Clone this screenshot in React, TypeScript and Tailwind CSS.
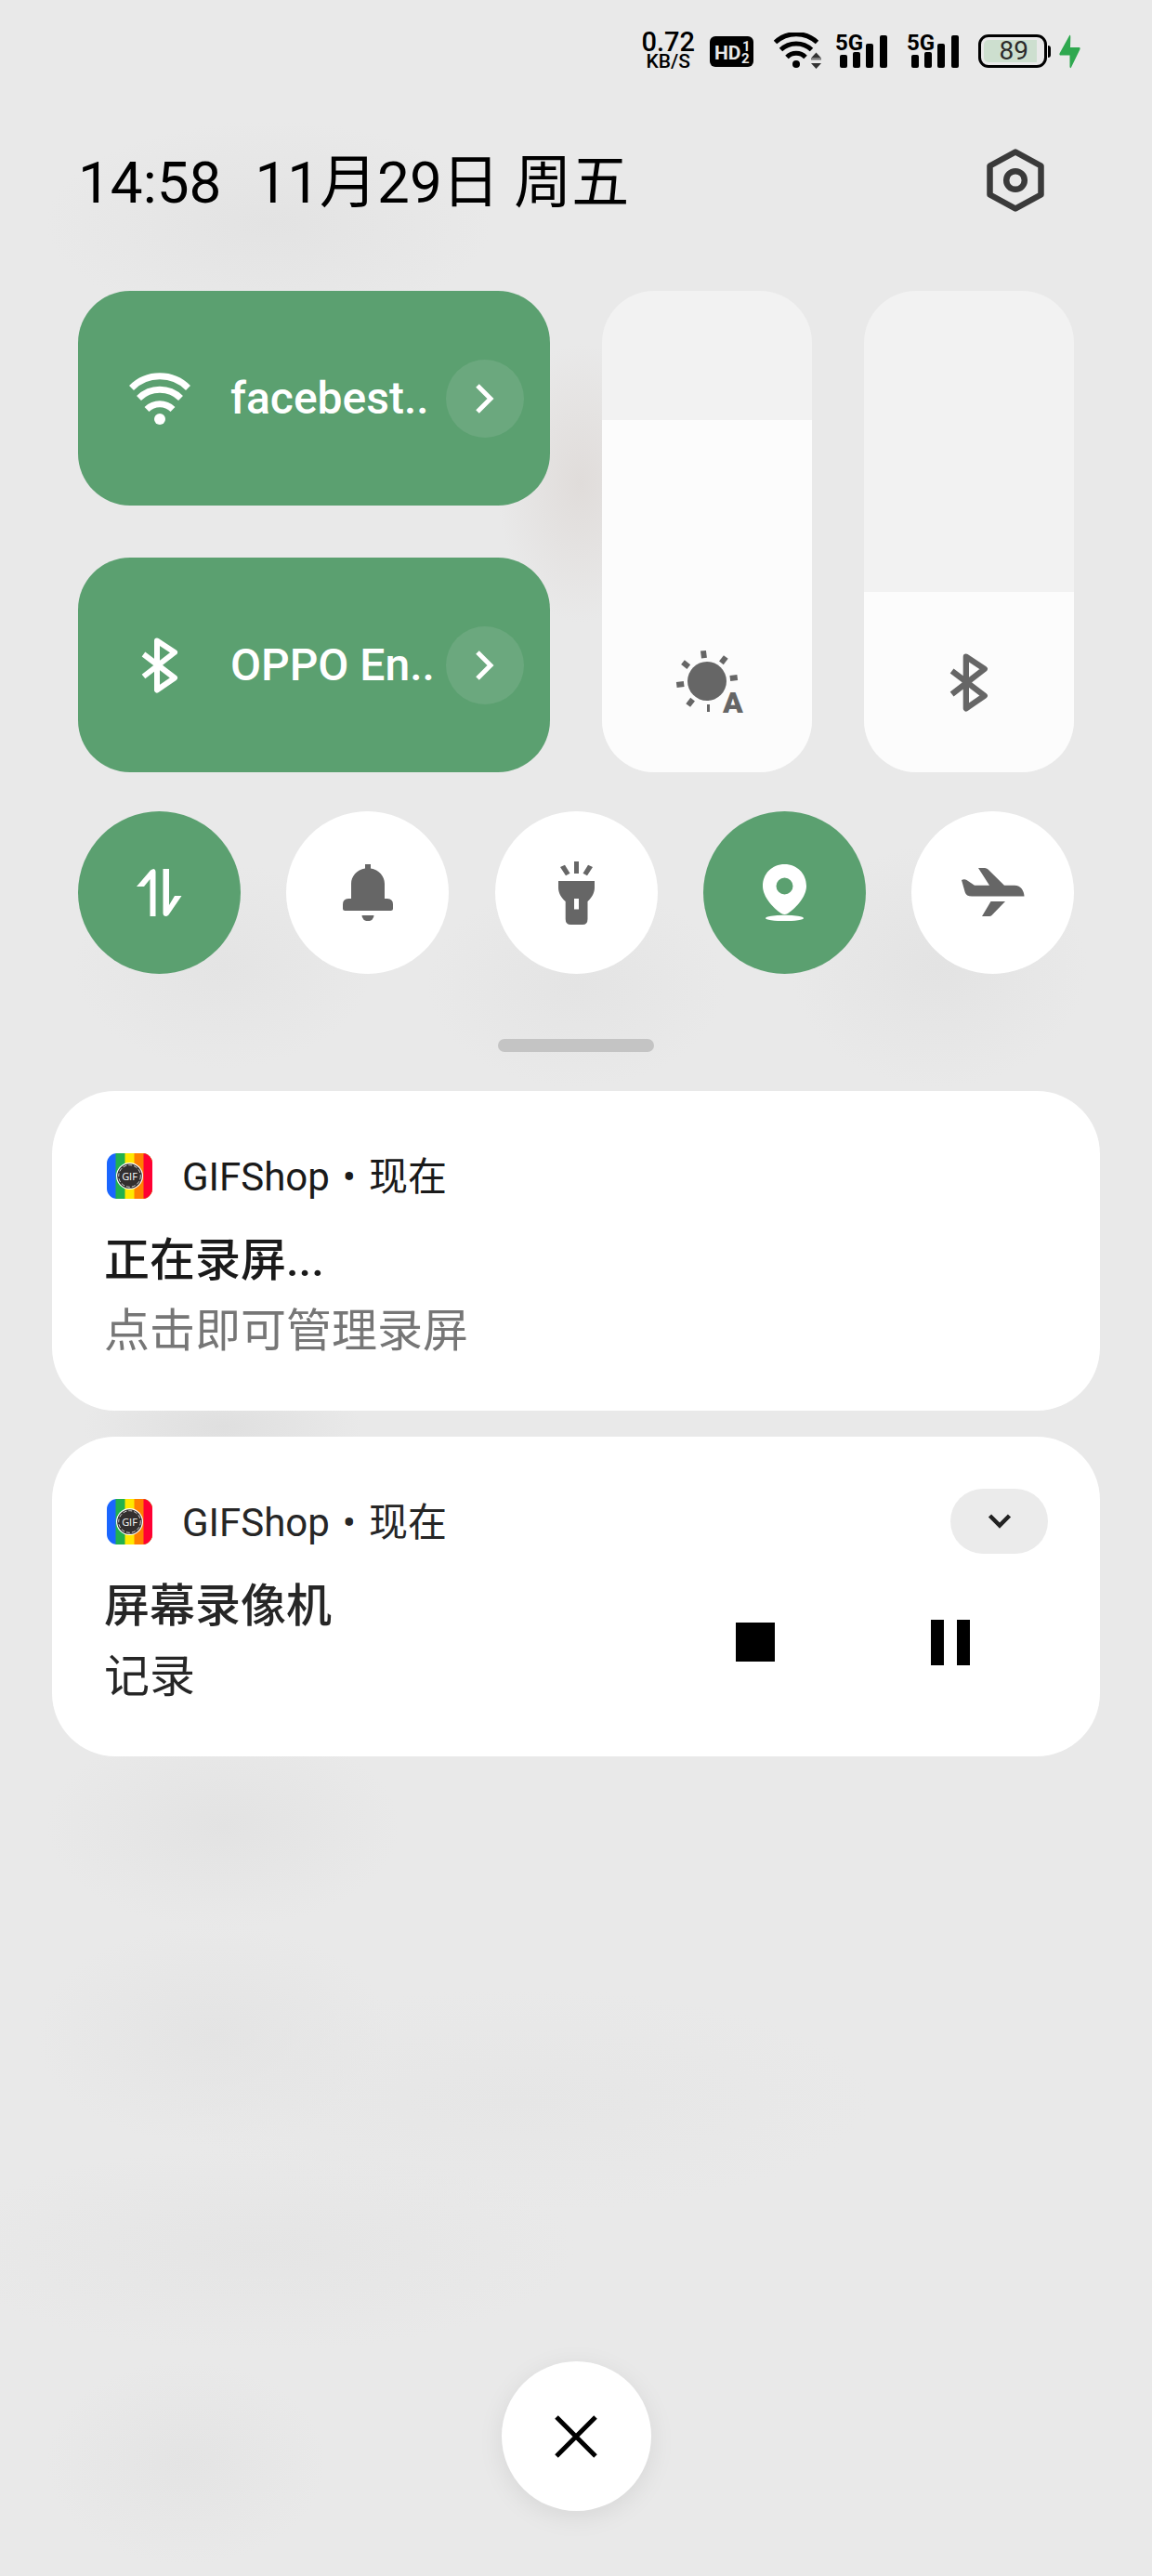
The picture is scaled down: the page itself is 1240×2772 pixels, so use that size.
import React, { useState } from "react";

const FONT = "font-['Roboto','Noto_Sans_CJK_SC',sans-serif]";

function BluetoothIcon({ className }: { className: string }) {
  return (
    <svg viewBox="0 0 40 60" className={className} fill="none" stroke="currentColor" strokeWidth="6" strokeLinejoin="round" aria-hidden="true">
      <path d="M2.5 18 L36 43.5 L17 56.5 V3.5 L36 16 L2.5 42" />
    </svg>
  );
}

function WifiIcon() {
  return (
    <svg viewBox="0 0 66 56" className="w-[66px] h-[56px]" fill="none" stroke="currentColor" strokeWidth="7" aria-hidden="true">
      <path d="M2.5 16.5 A43 43 0 0 1 63.5 16.5" />
      <path d="M10.5 27.6 A32 32 0 0 1 55.5 27.6" />
      <path d="M19 39.5 A20 20 0 0 1 47 39.5" />
      <circle cx="33" cy="50" r="6" fill="currentColor" stroke="none" />
    </svg>
  );
}

const SUN_RAYS = [-7, -52, -97, -142, 173, 128];

function SunAutoIcon() {
  return (
    <svg viewBox="-40 -34 80 70" className="w-[80px] h-[70px] overflow-visible" fill="currentColor" aria-hidden="true">
      <circle r="21" />
      {SUN_RAYS.map((angle) => (
        <rect key={angle} x="25" y="-3" width="8" height="6" transform={`rotate(${angle})`} />
      ))}
      <rect x="0" y="25" width="3" height="8" />
      <text x="28" y="34" textAnchor="middle" className="font-['Roboto',sans-serif] font-black text-[32px]">A</text>
    </svg>
  );
}

function DataIcon() {
  return (
    <svg viewBox="0 0 49 51" className="w-[49px] h-[51px]" fill="currentColor" aria-hidden="true">
      <path d="M0 19 L15 1.5 Q17 0 18.5 0 Q20.5 0.3 20.5 3 V51 H14.5 V11 L8 19Z" />
      <path d="M28.5 0 H35 V39 L41 29 H48.5 L34.5 49.5 Q33 51 31 51 Q28.5 50.7 28.5 48Z" />
    </svg>
  );
}

function BellIcon() {
  return (
    <svg viewBox="0 0 54 61" className="w-[54px] h-[61px]" fill="currentColor" aria-hidden="true">
      <path d="M24 0 H30 V4.5 C39 6 45 13 45 21 V37 H48 Q54 37.5 54 43 V47.5 Q54 50 51.5 50 H2.5 Q0 50 0 47.5 V43 Q0 37.5 6 37 H9 V21 C9 13 15 6 24 4.5Z" />
      <path d="M20.5 55 H33.5 A6.5 6.2 0 0 1 20.5 55Z" />
    </svg>
  );
}

function TorchIcon() {
  return (
    <svg viewBox="0 0 39 68" className="w-[39px] h-[68px]" fill="currentColor" aria-hidden="true">
      <path d="M17 0 H22 V13 H17Z M2 6 L7 3.7 L12.5 12.7 L8 15.3Z M37 6 L32 3.7 L26.5 12.7 L31 15.3Z" />
      <path fillRule="evenodd" d="M0 21 H39 V28 C39 34 36 39 31.5 43 V62 Q31.5 68 26 68 H13.5 Q7.7 68 7.7 62 V43 C3 39 0 34 0 28Z M17 40 V51.5 H22 V40Z" />
    </svg>
  );
}

function PinIcon() {
  return (
    <svg viewBox="0 0 47 61" className="w-[47px] h-[61px]" fill="currentColor" aria-hidden="true">
      <path fillRule="evenodd" d="M23.5 0 C10 0 0 10 0 23.5 C0 35 11 47 20 53 Q23.5 55 27 53 C36 47 47 35 47 23.5 C47 10 37 0 23.5 0Z M23.5 14.5 A9 9 0 1 1 23.5 32.5 A9 9 0 1 1 23.5 14.5Z" />
      <ellipse cx="23.5" cy="58" rx="20.5" ry="3.2" />
    </svg>
  );
}

function PlaneIcon() {
  return (
    <svg viewBox="0 0 68 53" className="w-[68px] h-[53px]" fill="currentColor" aria-hidden="true">
      <path d="M0 13 Q3 11.5 5.5 13 L14 18.7 H30 L18 0 H25 Q27 0 28.5 1.5 L46 18.7 H57 C64 18.7 67.5 25 67.5 30.5 H11 Q5 30.5 3.7 26Z" />
      <path d="M31.5 36 H47 L32.5 51 Q31.5 52 30 52 H22Z" />
    </svg>
  );
}

function Chevron() {
  return (
    <svg viewBox="0 0 22 34" className="w-[22px] h-[34px]" fill="none" stroke="currentColor" strokeWidth="5" aria-hidden="true">
      <path d="M3 3 L17 17 L3 31" />
    </svg>
  );
}

function Signal({ className }: { className: string }) {
  return (
    <svg viewBox="0 0 54 40" className={`w-[54px] h-[40px] overflow-visible ${className}`} role="img" aria-label="5G 信号">
      <text x="-2" y="19" className="font-['Roboto',sans-serif] font-bold text-[24px]">5G</text>
      <rect x="3" y="24" width="8" height="14" rx="2" />
      <rect x="17" y="21" width="8" height="17" rx="2" />
      <rect x="31" y="12" width="8" height="26" rx="2" />
      <rect x="46" y="3" width="8" height="35" rx="2" />
    </svg>
  );
}

function StatusBar() {
  return (
    <div className="flex h-[110px] items-center justify-end pr-[77px] text-black">
      <div className="flex flex-col items-center font-medium">
        <span className="text-[29px] leading-[22px]">0.72</span>
        <span className="text-[21px] leading-[20px]">KB/S</span>
      </div>
      <svg viewBox="0 0 47 33" className="ml-4 h-[33px] w-[47px]" role="img" aria-label="HD 1 2">
        <rect width="47" height="33" rx="6" />
        <g fill="#e8e8e8" className="font-['Roboto',sans-serif] font-bold">
          <text x="5" y="25" className="text-[21px]">HD</text>
          <text x="35" y="16" className="text-[15px]">1</text>
          <text x="34" y="29" className="text-[15px]">2</text>
        </g>
      </svg>
      <svg viewBox="0 0 52 40" className="ml-[22px] h-[40px] w-[52px]" fill="none" stroke="currentColor" strokeWidth="5" role="img" aria-label="WLAN">
        <path d="M1.500 10.5 A33 33 0 0 1 46.5 10.5" />
        <path d="M7.5 18.5 A24 24 0 0 1 40.5 18.5" />
        <path d="M14 26.5 A14 14 0 0 1 34 26.5" />
        <circle cx="24" cy="34" r="4" fill="currentColor" stroke="none" />
        <path d="M40 27.5 L45.5 21.5 L51 27.5Z M40 33 L45.5 39 L51 33Z" fill="#333" stroke="none" />
        <path d="M40 28.5 H51" stroke="#777" strokeWidth="2" />
      </svg>
      <Signal className="ml-4" />
      <Signal className="ml-[23px]" />
      <div className="ml-[21px] flex items-center" role="img" aria-label="电量 89%">
        <div className="flex h-[36px] w-[74px] items-center rounded-[11px] border-[3px] border-black p-[3px]">
          <div className="flex h-[24px] w-[57px] items-center justify-end rounded-l-[5px] bg-[#cddfcf] pr-[9px] text-[28px] leading-6 text-[#2b2b2b]">
            89
          </div>
        </div>
        <div className="ml-px h-[13px] w-[3px] rounded-r-sm bg-black" />
      </div>
      <svg viewBox="0 0 23 37" className="ml-[9px] h-[37px] w-[23px]" fill="#2fa84f" role="img" aria-label="充电中">
        <path d="M11.5 0.5 Q12.5 1 12.3 3 L12 14 H22 Q23 14.5 22.5 16 L13 35.5 Q12 37 11.5 35 V22.5 H1 Q0 22 0.5 20.5Z" />
      </svg>
    </div>
  );
}

function Tile({ icon, label }: { icon: React.ReactNode; label: string }) {
  return (
    <div className="flex h-[231px] items-center rounded-[56px] bg-[#5ba070] pr-7 text-white">
      <button type="button" className="flex h-full min-w-0 flex-1 items-center pl-11 text-left">
        <span className="flex w-[88px] shrink-0 justify-center">{icon}</span>
        <span className="ml-8 whitespace-nowrap text-[48px] font-medium leading-[60px]">{label}</span>
      </button>
      <button type="button" aria-label={`${label} 详情`} className="flex size-[84px] shrink-0 items-center justify-center rounded-full bg-[#6ba87e]">
        <Chevron />
      </button>
    </div>
  );
}

function VerticalSlider({ label, initial, children }: { label: string; initial: number; children: React.ReactNode }) {
  const [value, setValue] = useState(initial);
  return (
    <label className="relative flex flex-col justify-end overflow-hidden rounded-[56px] bg-[#f2f2f2] text-[#666]">
      <span className="block bg-[#fcfcfc]" style={{ height: `${value / 10}%` }} />
      <span className="absolute inset-x-0 bottom-[62px] flex h-[70px] items-center justify-center">{children}</span>
      <input
        type="range"
        min={0}
        max={1000}
        value={value}
        onChange={(e) => setValue(Number(e.target.value))}
        aria-label={label}
        className="absolute inset-0 h-full w-full opacity-0 [direction:rtl] [writing-mode:vertical-lr]"
      />
    </label>
  );
}

function RoundToggle({ label, on, children }: { label: string; on?: boolean; children: React.ReactNode }) {
  return (
    <button
      type="button"
      aria-label={label}
      aria-pressed={!!on}
      className={`flex size-[175px] items-center justify-center rounded-full ${on ? "bg-[#5ba070] text-white" : "bg-white text-[#666]"}`}
    >
      {children}
    </button>
  );
}

function AppIcon() {
  return (
    <svg viewBox="0 0 49 49" className="ml-[3px] size-[49px] overflow-hidden rounded-[11px]" role="img" aria-label="GIFShop">
      <rect width="49" height="49" fill="#1a66ff" />
      <rect x="9.5" width="40" height="49" fill="#22b14c" />
      <rect x="19.5" width="30" height="49" fill="#ffe800" />
      <rect x="29.5" width="20" height="49" fill="#ff8000" />
      <rect x="39.5" width="10" height="49" fill="#ff0033" />
      <circle cx="24.5" cy="24.5" r="14.5" fill="#fff" />
      <circle cx="24.5" cy="24.5" r="13.3" fill="#332f2f" />
      <circle cx="24.5" cy="24.5" r="11.8" fill="none" stroke="#fff" strokeWidth="0.8" strokeDasharray="4 2" />
      <text x="24.5" y="28.5" textAnchor="middle" fill="#fff" className="font-['Open_Sans',sans-serif] text-[11px]">GIF</text>
    </svg>
  );
}

interface CardProps {
  title: string;
  body: string;
  tone: string;
  bodyTone: string;
  expand?: React.ReactNode;
  actions?: React.ReactNode;
}

function NotificationCard({ title, body, tone, bodyTone, expand, actions }: CardProps) {
  return (
    <article className="rounded-[68px] bg-white px-14 pb-[47px] pt-14">
      <header className={`flex h-[70px] items-center ${tone}`}>
        <AppIcon />
        <p className="ml-8 flex-1 pt-1 text-[42px] leading-[56px]">
          GIFShop<span className="mx-3.5">•</span>现在
        </p>
        {expand}
      </header>
      <div className="mt-[19px] flex items-center justify-between">
        <div className="text-[49px] leading-[76px]">
          <h2 className={`font-medium ${tone}`}>{title}</h2>
          <p className={bodyTone}>{body}</p>
        </div>
        {actions}
      </div>
    </article>
  );
}

export default function App() {
  return (
    <main
      className={`flex min-h-screen flex-col bg-[#e9e9e9] bg-[radial-gradient(ellipse_240px_110px_at_290px_240px,#e3e3e3,transparent),radial-gradient(ellipse_90px_150px_at_625px_520px,#e0dcda,transparent),radial-gradient(ellipse_160px_110px_at_240px_1040px,#e4e4e4,transparent),radial-gradient(ellipse_160px_110px_at_620px_1060px,#e4e4e4,transparent),radial-gradient(ellipse_160px_130px_at_1010px_1040px,#e3e3e3,transparent),radial-gradient(ellipse_150px_60px_at_240px_1535px,#dfdfdf,transparent),radial-gradient(ellipse_190px_110px_at_240px_1965px,#e3e3e3,transparent),radial-gradient(ellipse_190px_120px_at_230px_2190px,#e4e4e4,transparent),radial-gradient(ellipse_380px_120px_at_560px_2260px,#e6e6e6,transparent),radial-gradient(ellipse_340px_110px_at_280px_2420px,#e5e5e5,transparent),radial-gradient(ellipse_150px_110px_at_200px_2650px,#e4e4e4,transparent)] ${FONT}`}
    >
      <StatusBar />

      <header className="flex h-[168px] items-center justify-between pl-[84px] pr-[116px]">
        <h1 className="flex gap-9 pt-1.5 text-[62px] leading-[80px] text-black">
          <time>14:58</time>
          <span>11月29日 周五</span>
        </h1>
        <button type="button" aria-label="设置">
          <svg viewBox="0 0 62 68" className="h-[68px] w-[62px]" fill="none" stroke="#3a3a3a" strokeWidth="6.5" strokeLinejoin="round" aria-hidden="true">
            <path d="M31 3.5 L58.5 18.5 V49.5 L31 64.5 L3.5 49.5 V18.5Z" />
            <circle cx="31" cy="34" r="9.8" />
          </svg>
        </button>
      </header>

      <section aria-label="快捷设置" className="mt-[35px] px-[84px]">
        <div className="grid grid-cols-[508fr_226fr_226fr] gap-14">
          <div className="flex flex-col gap-14">
            <Tile icon={<WifiIcon />} label="facebest.." />
            <Tile icon={<BluetoothIcon className="h-[60px] w-[40px]" />} label="OPPO En.." />
          </div>
          <VerticalSlider label="亮度" initial={732}>
            <SunAutoIcon />
          </VerticalSlider>
          <VerticalSlider label="蓝牙音量" initial={374}>
            <BluetoothIcon className="h-[63px] w-[42px]" />
          </VerticalSlider>
        </div>
        <div className="mt-[42px] flex justify-between">
          <RoundToggle label="移动数据" on><DataIcon /></RoundToggle>
          <RoundToggle label="响铃"><BellIcon /></RoundToggle>
          <RoundToggle label="手电筒"><TorchIcon /></RoundToggle>
          <RoundToggle label="位置信息" on><PinIcon /></RoundToggle>
          <RoundToggle label="飞行模式"><PlaneIcon /></RoundToggle>
        </div>
      </section>

      <div className="mt-[70px] h-[14px] w-[168px] self-center rounded-full bg-[#c4c4c4]" />

      <section aria-label="通知" className="mt-[42px] flex flex-col gap-7 px-14">
        <NotificationCard title="正在录屏..." body="点击即可管理录屏" tone="text-[#1a1a1a]" bodyTone="text-[#767676]" />
        <NotificationCard
          title="屏幕录像机"
          body="记录"
          tone="text-[#262626]"
          bodyTone="text-[#262626]"
          expand={
            <button type="button" aria-label="展开" className="flex h-[70px] w-[105px] items-center justify-center rounded-full bg-[#ebebeb]">
              <svg viewBox="0 0 26 16" className="h-[16px] w-[26px]" fill="none" stroke="#222" strokeWidth="4.5" aria-hidden="true">
                <path d="M2.5 2 L13 12.5 L23.5 2" />
              </svg>
            </button>
          }
          actions={
            <div className="flex">
              <button type="button" aria-label="停止" className="flex h-[105px] w-[210px] items-center justify-center">
                <span className="size-[42px] bg-black" />
              </button>
              <button type="button" aria-label="暂停" className="flex h-[105px] w-[210px] items-center justify-center gap-[14px]">
                <span className="h-[49px] w-[14px] bg-black" />
                <span className="h-[49px] w-[14px] bg-black" />
              </button>
            </div>
          }
        />
      </section>

      <div className="mt-auto flex justify-center pb-[70px] pt-14">
        <button type="button" aria-label="清除全部" className="flex size-[161px] items-center justify-center rounded-full bg-white shadow-[0_6px_28px_rgba(0,0,0,0.08)]">
          <svg viewBox="0 0 46 46" className="size-[46px]" fill="none" stroke="#000" strokeWidth="5" aria-hidden="true">
            <path d="M2 2 L44 44 M44 2 L2 44" />
          </svg>
        </button>
      </div>
    </main>
  );
}
